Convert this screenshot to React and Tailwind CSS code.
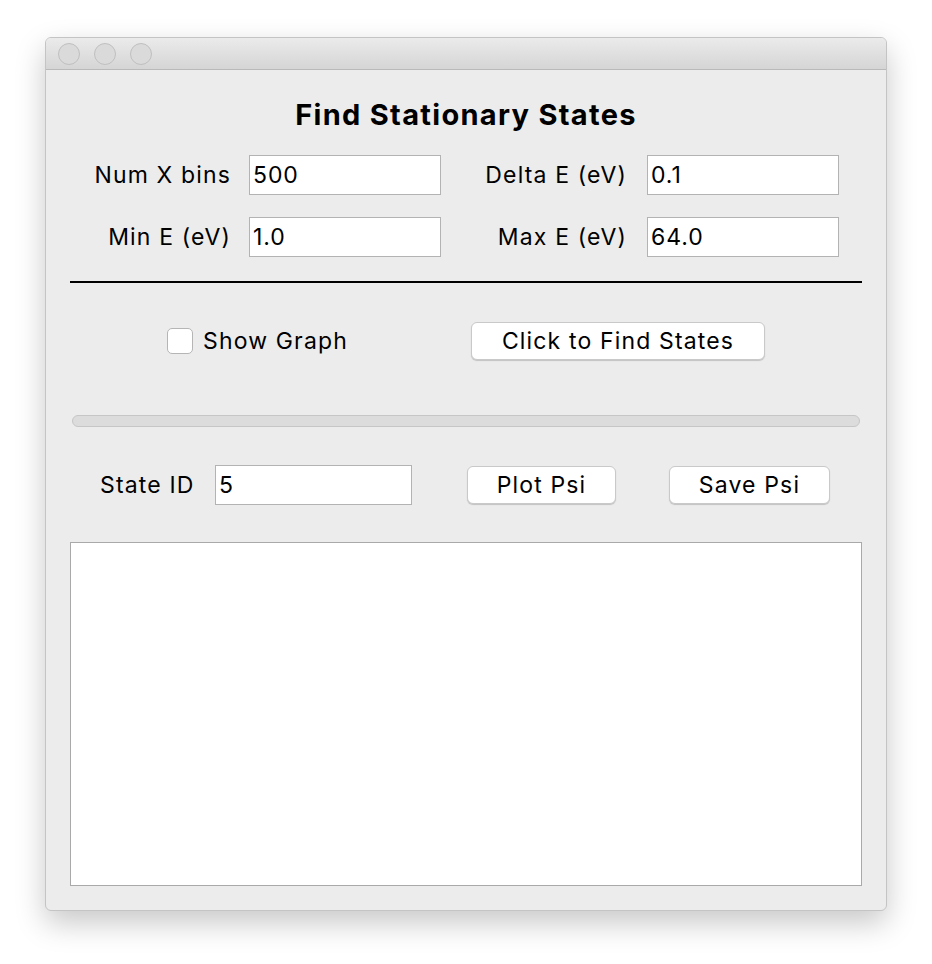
import React from "react";

const font = { fontFamily: "Inter, 'Noto Sans', sans-serif" };

function Field({ value, w = "w-[192px]" }) {
  return (
    <div className={`${w} h-[40px] bg-white border border-[#b3b3b3] flex items-center pl-[3px] text-[23px] tracking-[0.04em] text-black leading-none`}>
      {value}
    </div>
  );
}

function Btn({ children, w }) {
  return (
    <div className={`${w} h-[38px] bg-white rounded-[6px] border border-[#c9c9c9] shadow-[0_1px_1px_rgba(0,0,0,0.18)] flex items-center justify-center text-[23px] tracking-[0.05em] text-black leading-none`}>
      {children}
    </div>
  );
}

export default function App() {
  return (
    <div className="w-[932px] h-[964px] bg-white pt-[37px] pl-[45px]" style={font}>
      <div className="w-[842px] h-[874px] rounded-[6px] bg-[#ececec] border border-[#c4c4c4] shadow-[0_12px_30px_rgba(0,0,0,0.22)] flex flex-col overflow-hidden">
        <div className="h-[32px] shrink-0 bg-gradient-to-b from-[#ebebeb] to-[#d5d5d5] border-b border-[#b9b9b9] flex items-center pl-[12px] gap-[14px]">
          <div className="w-[22px] h-[22px] rounded-full bg-[#dadada] border border-[#bfbfbf]" />
          <div className="w-[22px] h-[22px] rounded-full bg-[#dadada] border border-[#bfbfbf]" />
          <div className="w-[22px] h-[22px] rounded-full bg-[#dadada] border border-[#bfbfbf]" />
        </div>

        <div className="flex flex-col">
          <div className="mt-[27px] h-[36px] leading-[36px] text-center text-[29px] tracking-[0.045em] font-bold text-black">
            Find Stationary States
          </div>

          <div className="mt-[22px] flex items-center h-[40px] pl-[39px]">
            <div className="w-[146px] text-right text-[23px] tracking-[0.05em] text-black whitespace-nowrap">Num X bins</div>
            <div className="ml-[18px]"><Field value="500" /></div>
            <div className="w-[186px] text-right text-[23px] tracking-[0.05em] text-black whitespace-nowrap">Delta E (eV)</div>
            <div className="ml-[20px]"><Field value="0.1" /></div>
          </div>

          <div className="mt-[22px] flex items-center h-[40px] pl-[39px]">
            <div className="w-[146px] text-right text-[23px] tracking-[0.05em] text-black whitespace-nowrap">Min E (eV)</div>
            <div className="ml-[18px]"><Field value="1.0" /></div>
            <div className="w-[186px] text-right text-[23px] tracking-[0.05em] text-black whitespace-nowrap">Max E (eV)</div>
            <div className="ml-[20px]"><Field value="64.0" /></div>
          </div>

          <div className="mt-[24px] mx-[24px] h-[2px] bg-black" />

          <div className="mt-[39px] h-[38px] flex items-center pl-[121px]">
            <div className="w-[26px] h-[26px] bg-white rounded-[5px] border border-[#b5b5b5]" />
            <div className="ml-[10px] w-[268px] text-[23px] tracking-[0.05em] text-black whitespace-nowrap">Show Graph</div>
            <Btn w="w-[294px]">Click to Find States</Btn>
          </div>

          <div className="mt-[55px] mx-[26px] h-[12px] rounded-full bg-[#dcdcdc] border border-[#c6c6c6]" />

          <div className="mt-[38px] h-[40px] flex items-center pl-[54px]">
            <div className="w-[115px] text-[23px] tracking-[0.05em] text-black whitespace-nowrap">State ID</div>
            <Field value="5" w="w-[197px]" />
            <div className="ml-[55px]"><Btn w="w-[149px]">Plot Psi</Btn></div>
            <div className="ml-[53px]"><Btn w="w-[161px]">Save Psi</Btn></div>
          </div>

          <div className="mt-[37px] mx-[24px] h-[344px] bg-white border border-[#a9a9a9]" />
        </div>
      </div>
    </div>
  );
}
